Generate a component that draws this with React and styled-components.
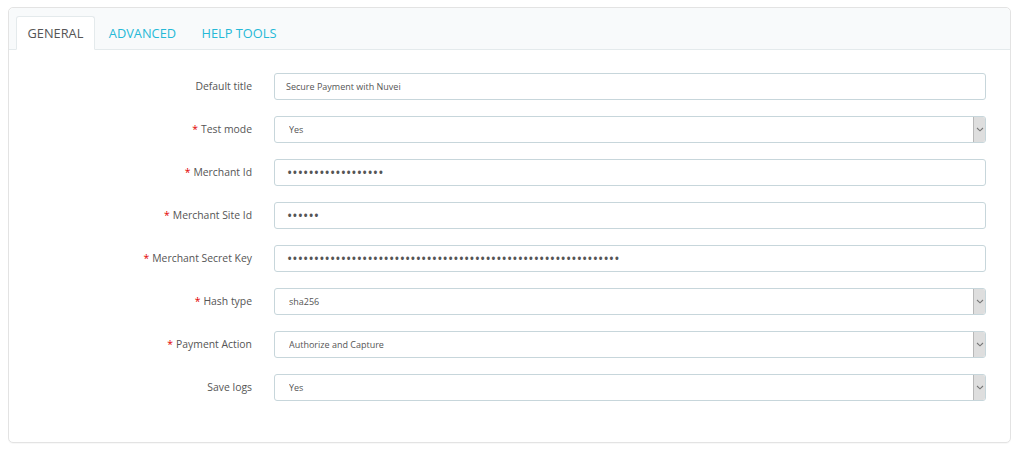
import React from "react";
import styled, { createGlobalStyle } from "styled-components";

const Global = createGlobalStyle`
  html, body { margin: 0; padding: 0; background: #fff; }
  body { font-family: "Open Sans", "Liberation Sans", sans-serif; }
  * { box-sizing: border-box; }
`;

const Page = styled.div`
  padding: 7px 13px 12px 8px;
`;

const Panel = styled.div`
  border: 1px solid #e3e3e3;
  border-radius: 5px;
  background: #fff;
  box-shadow: 0 1px 1px rgba(0,0,0,0.03);
`;

const TabBar = styled.div`
  display: flex;
  align-items: flex-end;
  padding: 8px 8px 0 7px;
  height: 42px;
  background: #f8fafb;
  border-bottom: 1px solid #e4eaec;
  border-radius: 5px 5px 0 0;
`;

const Tab = styled.div`
  height: 34px;
  margin-bottom: -1px;
  padding: 0 11px 0 10.5px;
  display: flex;
  align-items: center;
  font-size: 12.8px;
  text-transform: uppercase;
  color: ${p => (p.$active ? "#555" : "#25b9d7")};
  background: ${p => (p.$active ? "#fff" : "transparent")};
  border: 1px solid ${p => (p.$active ? "#e4eaec" : "transparent")};
  border-bottom-color: ${p => (p.$active ? "#fff" : "transparent")};
  border-radius: 3px 3px 0 0;
  margin-right: 2px;
`;

const Form = styled.div`
  padding: 23px 24px 41px 0;
  display: flex;
  flex-direction: column;
  gap: 16px;
`;

const Row = styled.div`
  display: grid;
  grid-template-columns: 243px 1fr;
  column-gap: 22px;
  align-items: center;
`;

const Label = styled.label`
  text-align: right;
  font-size: 10.4px;
  color: #555;
  padding-bottom: 1px;
`;

const Star = styled.span`
  color: #e30000;
  margin-right: 3px;
`;

const Input = styled.input`
  width: 100%;
  height: 27px;
  border: 1px solid #c7d6db;
  border-radius: 3px;
  padding: 0 11px;
  font-family: "Open Sans", "Liberation Sans", sans-serif;
  font-size: 9px;
  color: #555;
  background: #fff;
  outline: none;
  &[type="password"] {
    font-size: 14px;
    letter-spacing: 0.1px;
    padding-left: 12px;
  }
`;

const SelectWrap = styled.div`
  position: relative;
  width: 100%;
`;

const Select = styled.select`
  display: block;
  width: 100%;
  height: 27px;
  appearance: none;
  -webkit-appearance: none;
  border: 1px solid #c7d6db;
  border-radius: 3px;
  padding: 0 14px;
  font-family: "Open Sans", "Liberation Sans", sans-serif;
  font-size: 9px;
  color: #555;
  background: #fff;
  outline: none;
`;

const Arrow = styled.div`
  position: absolute;
  right: 1px;
  top: 1px;
  bottom: 1px;
  width: 12px;
  background: #dedede;
  border-left: 1px solid #b8b8b8;
  border-radius: 0 2px 2px 0;
  display: flex;
  align-items: center;
  justify-content: center;
  pointer-events: none;
`;

const Chevron = () => (
  <svg width="8" height="5" viewBox="0 0 8 5">
    <path d="M1 1 L4 3.8 L7 1" fill="none" stroke="#777" strokeWidth="1.1" />
  </svg>
);

const SelectField = ({ value }) => (
  <SelectWrap>
    <Select defaultValue={value}>
      <option>{value}</option>
    </Select>
    <Arrow>
      <Chevron />
    </Arrow>
  </SelectWrap>
);

const rows = [
  { label: "Default title", type: "text", value: "Secure Payment with Nuvei" },
  { label: "Test mode", req: true, type: "select", value: "Yes" },
  { label: "Merchant Id", req: true, type: "password", value: "x".repeat(18) },
  { label: "Merchant Site Id", req: true, type: "password", value: "x".repeat(6) },
  { label: "Merchant Secret Key", req: true, type: "password", value: "x".repeat(62) },
  { label: "Hash type", req: true, type: "select", value: "sha256" },
  { label: "Payment Action", req: true, type: "select", value: "Authorize and Capture" },
  { label: "Save logs", type: "select", value: "Yes" },
];

export default function App() {
  return (
    <>
      <Global />
      <Page>
        <Panel>
          <TabBar>
            <Tab $active>General</Tab>
            <Tab>Advanced</Tab>
            <Tab>Help Tools</Tab>
          </TabBar>
          <Form>
            {rows.map(r => (
              <Row key={r.label}>
                <Label>
                  {r.req && <Star>*</Star>}
                  {r.label}
                </Label>
                {r.type === "select" ? (
                  <SelectField value={r.value} />
                ) : (
                  <Input type={r.type} defaultValue={r.value} readOnly />
                )}
              </Row>
            ))}
          </Form>
        </Panel>
      </Page>
    </>
  );
}
